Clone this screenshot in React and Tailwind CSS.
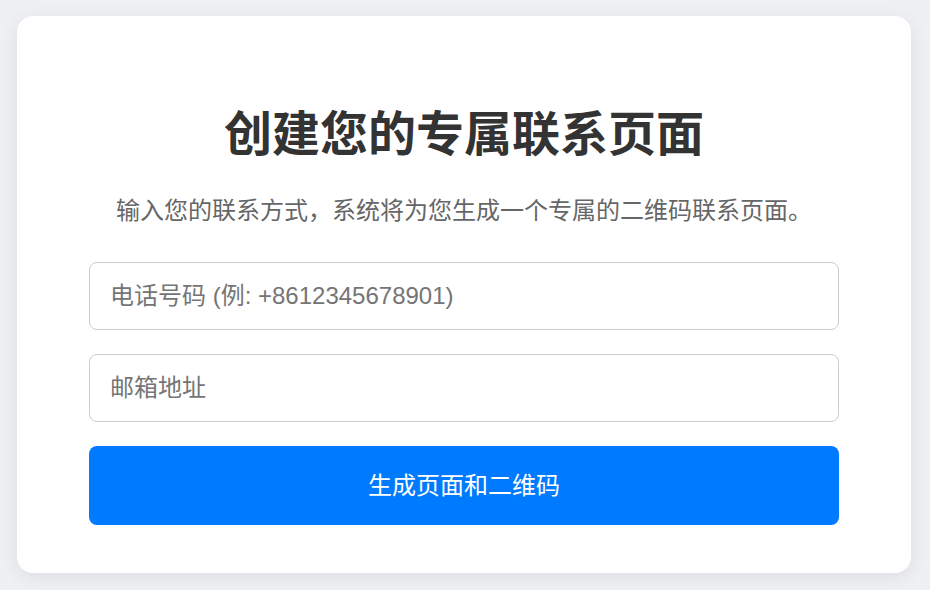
export default function App() {
  const font = { fontFamily: '"Liberation Sans", Arial, "Noto Sans CJK SC", sans-serif' };
  return (
    <div className="min-h-[590px] w-[930px] bg-[#eef0f4] pt-[16px] pl-[17px] pb-[18px]" style={font}>
      <div className="w-[894px] rounded-[16px] bg-white px-[72px] pt-[87px] pb-[48px] shadow-[0_4px_20px_rgba(0,0,0,0.08)]">
        <h1 className="text-center text-[48px] font-bold leading-[64px] text-[#333333]">创建您的专属联系页面</h1>
        <p className="mt-[26px] text-center text-[24px] leading-[36px] text-[#666666]">
          输入您的联系方式，系统将为您生成一个专属的二维码联系页面。
        </p>
        <div className="mt-[33px] flex flex-col gap-[24px]">
          <input
            type="tel"
            placeholder="电话号码 (例: +8612345678901)"
            className="h-[68px] w-full rounded-[8px] border border-[#cccccc] px-[20px] text-[24px] text-[#333333] outline-none placeholder:text-[#757575]"
          />
          <input
            type="email"
            placeholder="邮箱地址"
            className="h-[68px] w-full rounded-[8px] border border-[#cccccc] px-[20px] text-[24px] text-[#333333] outline-none placeholder:text-[#757575]"
          />
          <button className="h-[79px] w-full rounded-[8px] bg-[#007bff] text-[24px] text-white">
            生成页面和二维码
          </button>
        </div>
      </div>
    </div>
  );
}
